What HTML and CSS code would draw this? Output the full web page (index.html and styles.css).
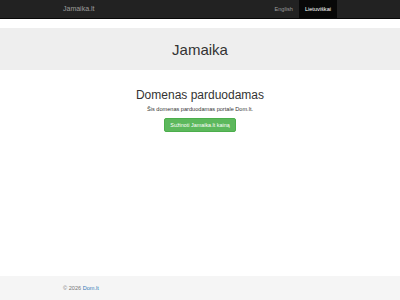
FILE: index.html
```html
<!DOCTYPE html>
<html lang="lt">
<head>
<meta charset="utf-8">
<link rel="stylesheet" href="styles.css">
</head>
<body>
<div class="page">
  <nav class="navbar">
    <div class="container nav-inner">
      <a class="brand" href="#">Jamaika.lt</a>
      <ul class="nav">
        <li><a href="#">English</a></li>
        <li class="active"><a href="#">Lietuviškai</a></li>
      </ul>
    </div>
  </nav>
  <div class="jumbotron">
    <h1>Jamaika</h1>
  </div>
  <main class="main">
    <h2>Domenas parduodamas</h2>
    <p>Šis domenas parduodamas portale Dom.lt.</p>
    <a class="btn" href="#">Sužinoti Jamaika.lt kainą</a>
  </main>
  <footer class="footer">
    <div class="container">© 2026 <a href="#">Dom.lt</a></div>
  </footer>
</div>
</body>
</html>
```

FILE: styles.css
```css
html, body { margin: 0; padding: 0; }
body {
  font-family: "Liberation Sans", Arial, Helvetica, sans-serif;
  color: #333;
  background: #fff;
}
.page {
  height: 300px;
  display: flex;
  flex-direction: column;
}
.container {
  width: 276px;
  margin: 0 auto;
  box-sizing: border-box;
  padding: 0 1px;
}
.navbar {
  background: #222;
  border-bottom: 1px solid #080808;
  height: 19px;
  box-sizing: border-box;
}
.nav-inner {
  display: flex;
  justify-content: space-between;
  align-items: stretch;
  height: 100%;
}
.brand {
  color: #9d9d9d;
  text-decoration: none;
  font-size: 7px;
  line-height: 18px;
}
.nav {
  list-style: none;
  margin: 0;
  padding: 0;
  display: flex;
}
.nav a {
  display: block;
  padding: 0 6px;
  line-height: 18px;
  font-size: 5.6px;
  color: #9d9d9d;
  text-decoration: none;
}
.nav .active a {
  background: #080808;
  color: #fff;
}
.jumbotron {
  margin-top: 9px;
  background: #eee;
  height: 42px;
  display: flex;
  align-items: center;
  justify-content: center;
}
.jumbotron h1 {
  margin: 0;
  font-weight: 400;
  font-size: 15px;
  color: #333;
}
.main {
  flex: 1;
  text-align: center;
  padding-top: 18px;
}
.main h2 {
  margin: 0;
  font-weight: 400;
  font-size: 12px;
  line-height: 14px;
}
.main p {
  margin: 3px 0 0;
  font-size: 5.6px;
  line-height: 8px;
}
.btn {
  display: inline-block;
  margin-top: 3px;
  background: #5cb85c;
  border: 1px solid #4cae4c;
  border-radius: 2px;
  color: #fff;
  text-decoration: none;
  font-size: 5.4px;
  line-height: 12px;
  padding: 0 5px;
}
.footer {
  background: #f5f5f5;
  height: 24px;
  display: flex;
  align-items: center;
  font-size: 5.6px;
  color: #777;
}
.footer a { color: #337ab7; text-decoration: none; }
```
